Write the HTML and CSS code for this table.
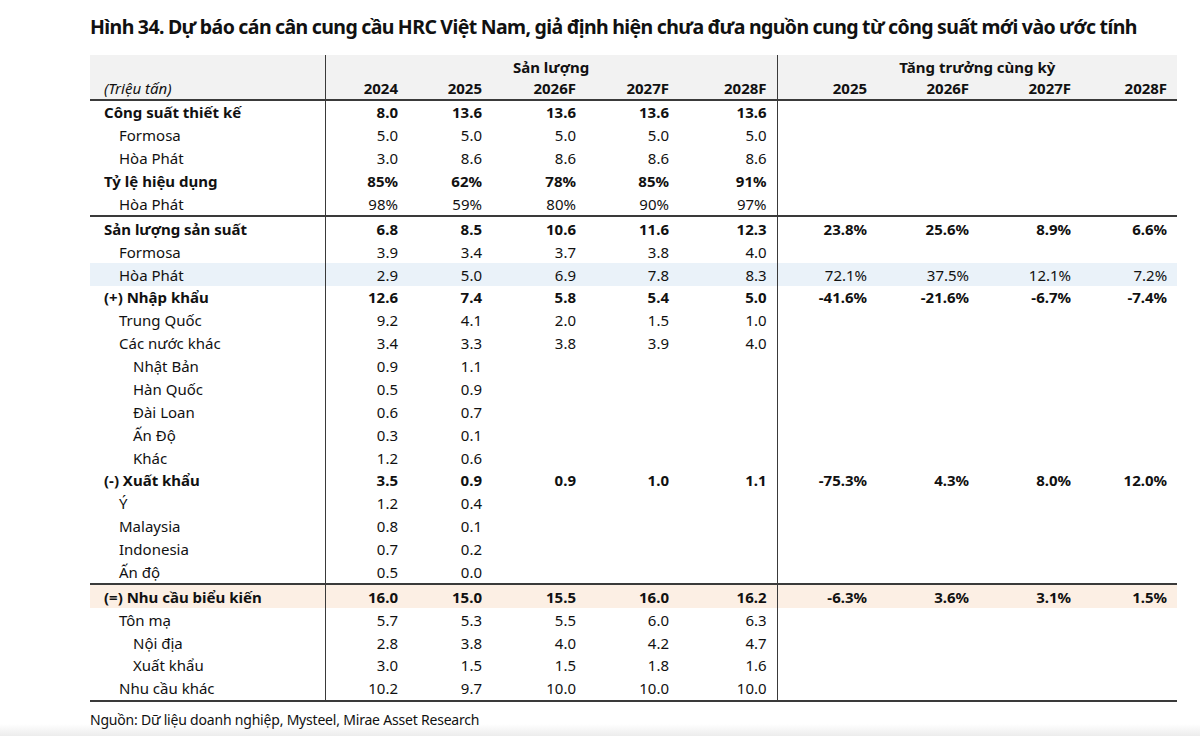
FILE: index.html
```html
<!DOCTYPE html>
<html lang="vi">
<head>
<meta charset="utf-8">
<title>Hình 34</title>
<link rel="stylesheet" href="styles.css">
</head>
<body>
<main class="page">
  <h1 class="title">Hình 34. Dự báo cán cân cung cầu HRC Việt Nam, giả định hiện chưa đưa nguồn cung từ công suất mới vào ước tính</h1>
  <table class="tbl">
    <colgroup>
      <col class="c-label">
      <col class="c-24"><col class="c-25"><col class="c-26"><col class="c-27"><col class="c-28">
      <col class="c-g25"><col class="c-g26"><col class="c-g27"><col class="c-g28">
    </colgroup>
    <thead>
      <tr class="h1">
        <th class="lbl sep"></th>
        <th colspan="5" class="grp sep">Sản lượng</th>
        <th colspan="4" class="grp">Tăng trưởng cùng kỳ</th>
      </tr>
      <tr class="h2">
        <th class="lbl unit sep">(Triệu tấn)</th>
        <th>2024</th><th>2025</th><th>2026F</th><th>2027F</th><th class="sep">2028F</th>
        <th>2025</th><th>2026F</th><th>2027F</th><th>2028F</th>
      </tr>
    </thead>
    <tbody>
      <tr class="b"><td class="lbl sep">Công suất thiết kế</td><td>8.0</td><td>13.6</td><td>13.6</td><td>13.6</td><td class="sep">13.6</td><td></td><td></td><td></td><td></td></tr>
      <tr><td class="lbl l1 sep">Formosa</td><td>5.0</td><td>5.0</td><td>5.0</td><td>5.0</td><td class="sep">5.0</td><td></td><td></td><td></td><td></td></tr>
      <tr><td class="lbl l1 sep">Hòa Phát</td><td>3.0</td><td>8.6</td><td>8.6</td><td>8.6</td><td class="sep">8.6</td><td></td><td></td><td></td><td></td></tr>
      <tr class="b"><td class="lbl sep">Tỷ lệ hiệu dụng</td><td>85%</td><td>62%</td><td>78%</td><td>85%</td><td class="sep">91%</td><td></td><td></td><td></td><td></td></tr>
      <tr class="end"><td class="lbl l1 sep">Hòa Phát</td><td>98%</td><td>59%</td><td>80%</td><td>90%</td><td class="sep">97%</td><td></td><td></td><td></td><td></td></tr>
      <tr class="b"><td class="lbl sep">Sản lượng sản suất</td><td>6.8</td><td>8.5</td><td>10.6</td><td>11.6</td><td class="sep">12.3</td><td>23.8%</td><td>25.6%</td><td>8.9%</td><td>6.6%</td></tr>
      <tr><td class="lbl l1 sep">Formosa</td><td>3.9</td><td>3.4</td><td>3.7</td><td>3.8</td><td class="sep">4.0</td><td></td><td></td><td></td><td></td></tr>
      <tr class="blue"><td class="lbl l1 sep">Hòa Phát</td><td>2.9</td><td>5.0</td><td>6.9</td><td>7.8</td><td class="sep">8.3</td><td>72.1%</td><td>37.5%</td><td>12.1%</td><td>7.2%</td></tr>
      <tr class="b"><td class="lbl sep">(+) Nhập khẩu</td><td>12.6</td><td>7.4</td><td>5.8</td><td>5.4</td><td class="sep">5.0</td><td>-41.6%</td><td>-21.6%</td><td>-6.7%</td><td>-7.4%</td></tr>
      <tr><td class="lbl l1 sep">Trung Quốc</td><td>9.2</td><td>4.1</td><td>2.0</td><td>1.5</td><td class="sep">1.0</td><td></td><td></td><td></td><td></td></tr>
      <tr><td class="lbl l1 sep">Các nước khác</td><td>3.4</td><td>3.3</td><td>3.8</td><td>3.9</td><td class="sep">4.0</td><td></td><td></td><td></td><td></td></tr>
      <tr><td class="lbl l2 sep">Nhật Bản</td><td>0.9</td><td>1.1</td><td></td><td></td><td class="sep"></td><td></td><td></td><td></td><td></td></tr>
      <tr><td class="lbl l2 sep">Hàn Quốc</td><td>0.5</td><td>0.9</td><td></td><td></td><td class="sep"></td><td></td><td></td><td></td><td></td></tr>
      <tr><td class="lbl l2 sep">Đài Loan</td><td>0.6</td><td>0.7</td><td></td><td></td><td class="sep"></td><td></td><td></td><td></td><td></td></tr>
      <tr><td class="lbl l2 sep">Ấn Độ</td><td>0.3</td><td>0.1</td><td></td><td></td><td class="sep"></td><td></td><td></td><td></td><td></td></tr>
      <tr><td class="lbl l2 sep">Khác</td><td>1.2</td><td>0.6</td><td></td><td></td><td class="sep"></td><td></td><td></td><td></td><td></td></tr>
      <tr class="b"><td class="lbl sep">(-) Xuất khẩu</td><td>3.5</td><td>0.9</td><td>0.9</td><td>1.0</td><td class="sep">1.1</td><td>-75.3%</td><td>4.3%</td><td>8.0%</td><td>12.0%</td></tr>
      <tr><td class="lbl l1 sep">Ý</td><td>1.2</td><td>0.4</td><td></td><td></td><td class="sep"></td><td></td><td></td><td></td><td></td></tr>
      <tr><td class="lbl l1 sep">Malaysia</td><td>0.8</td><td>0.1</td><td></td><td></td><td class="sep"></td><td></td><td></td><td></td><td></td></tr>
      <tr><td class="lbl l1 sep">Indonesia</td><td>0.7</td><td>0.2</td><td></td><td></td><td class="sep"></td><td></td><td></td><td></td><td></td></tr>
      <tr class="end"><td class="lbl l1 sep">Ấn độ</td><td>0.5</td><td>0.0</td><td></td><td></td><td class="sep"></td><td></td><td></td><td></td><td></td></tr>
      <tr class="b peach"><td class="lbl sep">(=) Nhu cầu biểu kiến</td><td>16.0</td><td>15.0</td><td>15.5</td><td>16.0</td><td class="sep">16.2</td><td>-6.3%</td><td>3.6%</td><td>3.1%</td><td>1.5%</td></tr>
      <tr><td class="lbl l1 sep">Tôn mạ</td><td>5.7</td><td>5.3</td><td>5.5</td><td>6.0</td><td class="sep">6.3</td><td></td><td></td><td></td><td></td></tr>
      <tr><td class="lbl l2 sep">Nội địa</td><td>2.8</td><td>3.8</td><td>4.0</td><td>4.2</td><td class="sep">4.7</td><td></td><td></td><td></td><td></td></tr>
      <tr><td class="lbl l2 sep">Xuất khẩu</td><td>3.0</td><td>1.5</td><td>1.5</td><td>1.8</td><td class="sep">1.6</td><td></td><td></td><td></td><td></td></tr>
      <tr class="end"><td class="lbl l1 sep">Nhu cầu khác</td><td>10.2</td><td>9.7</td><td>10.0</td><td>10.0</td><td class="sep">10.0</td><td></td><td></td><td></td><td></td></tr>
    </tbody>
  </table>
  <p class="source">Nguồn: Dữ liệu doanh nghiệp, Mysteel, Mirae Asset Research</p>
</main>
</body>
</html>
```

FILE: styles.css
```css
html, body {
  margin: 0;
  padding: 0;
}
body {
  width: 1200px;
  height: 736px;
  overflow: hidden;
  background: linear-gradient(to bottom, #ffffff 0, #ffffff 724px, #ececec 736px);
  font-family: "Noto Sans", "Open Sans", sans-serif;
  color: #111;
}
.page {
  padding: 12px 0 0 90px;
}
.title {
  margin: 0;
  font-size: 19.5px;
  line-height: 30px;
  font-weight: 700;
  letter-spacing: -0.57px;
  word-spacing: -0.5px;
  color: #111;
  white-space: nowrap;
}
.tbl {
  margin-top: 13px;
  border-collapse: collapse;
  table-layout: fixed;
  width: 1087px;
  font-size: 15px;
}
.c-label { width: 235px; }
.c-24 { width: 83px; }
.c-25 { width: 84px; }
.c-26 { width: 94px; }
.c-27 { width: 93px; }
.c-28 { width: 98px; }
.c-g25 { width: 100px; }
.c-g26 { width: 102px; }
.c-g27 { width: 102px; }
.c-g28 { width: 96px; }

.tbl th, .tbl td {
  padding: 0 10px 0 0;
  height: 22.88px;
  line-height: 20px;
  text-align: right;
  white-space: nowrap;
  vertical-align: middle;
}
.tbl thead tr { background: #f2f2f2; }
.tbl thead th { font-weight: 700; }
.tbl thead .h1 th { height: 22px; vertical-align: bottom; }
.tbl thead .h2 th { height: 22px; border-bottom: 2px solid #3a3a3a; }
.tbl th.grp { text-align: center; padding: 0; }
.tbl .lbl { text-align: left; padding-left: 14px; }
.tbl th.unit { font-weight: 400; font-style: italic; }
.tbl .l1 { padding-left: 29px; }
.tbl .l2 { padding-left: 43px; }
.tbl .sep { border-right: 1.5px solid #3a3a3a; }
.tbl tr.b td { font-weight: 700; }
.tbl tr.end td { border-bottom: 2px solid #3a3a3a; }
.tbl tr.blue { background: #eaf2f9; }
.tbl tr.peach { background: #fcefe4; }

.source {
  margin: 8px 0 0;
  font-size: 14px;
  line-height: 20px;
  letter-spacing: -0.2px;
  color: #111;
}
```
